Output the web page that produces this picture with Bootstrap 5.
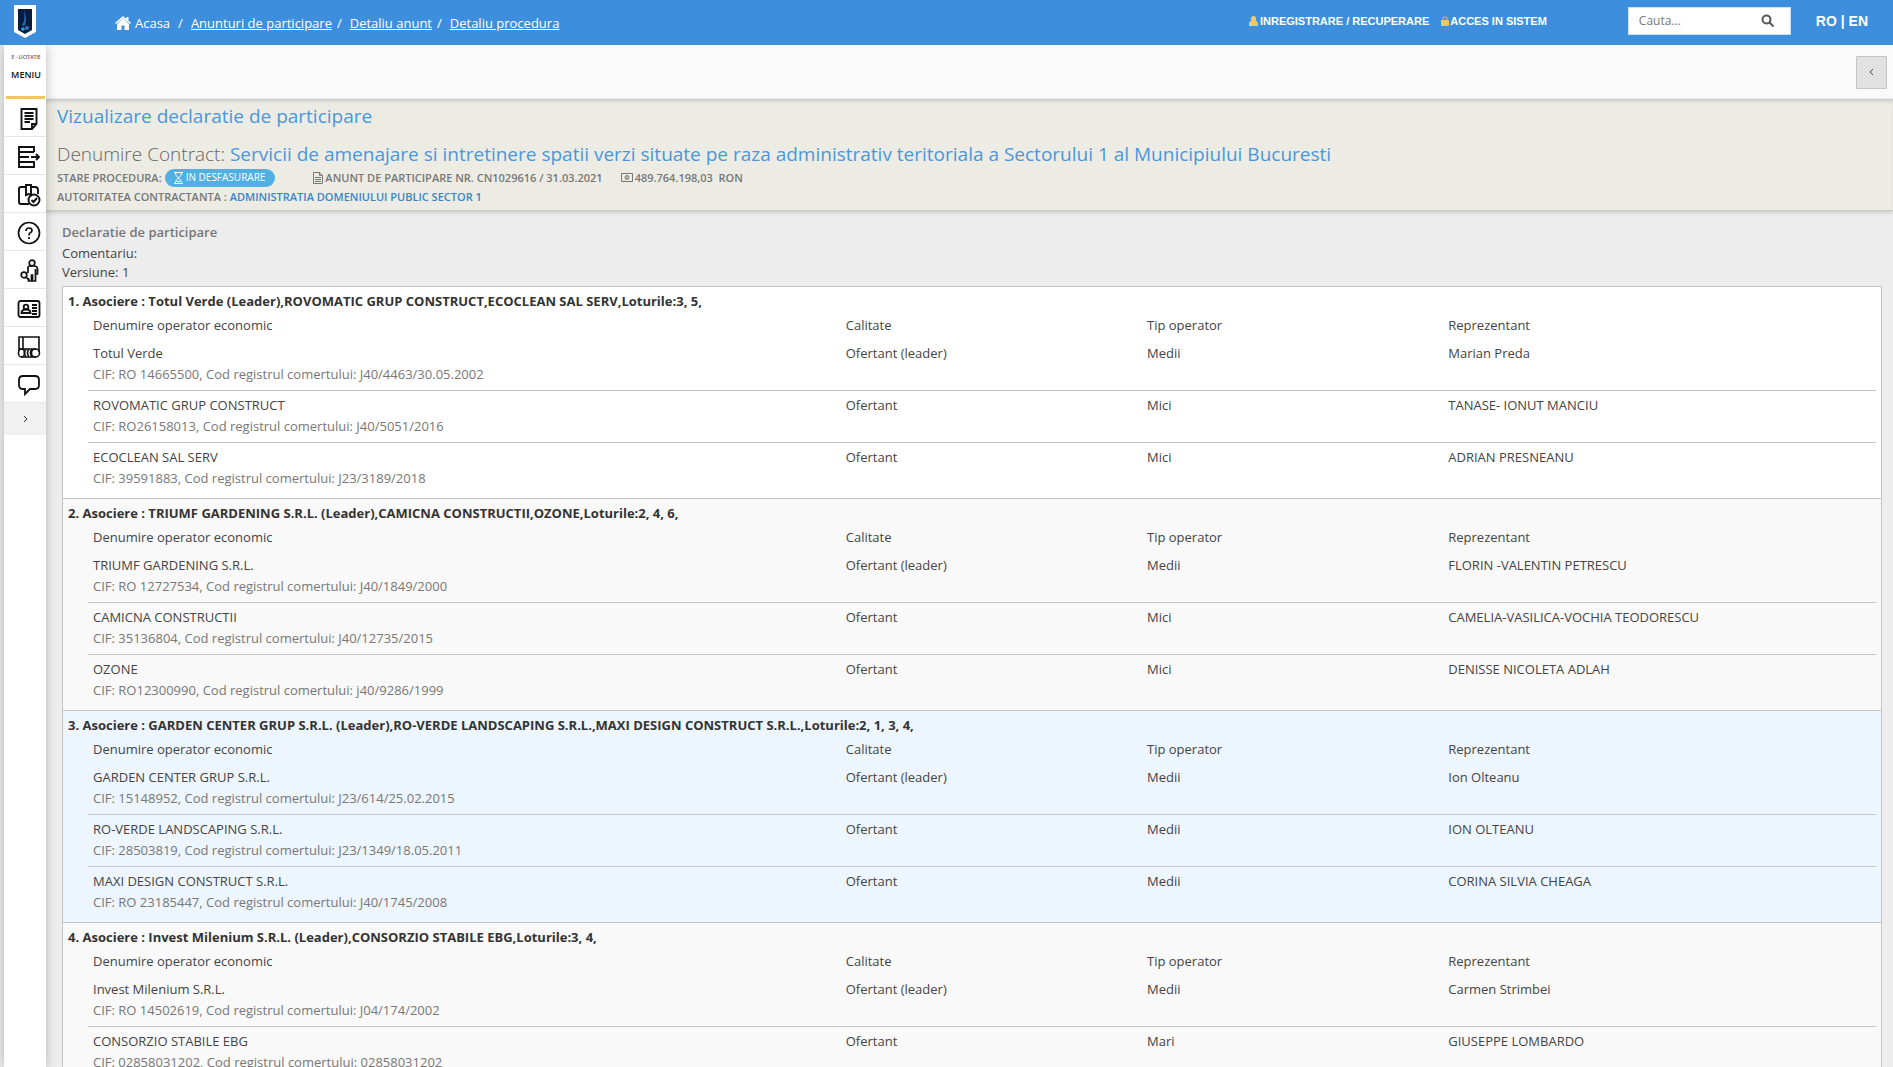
<!DOCTYPE html>
<html lang="ro">
<head>
<meta charset="utf-8">
<meta name="viewport" content="width=device-width, initial-scale=1">
<title>Vizualizare declaratie de participare</title>
<link href="https://cdn.jsdelivr.net/npm/bootstrap@5.3.0/dist/css/bootstrap.min.css" rel="stylesheet">
<style>
  html { overflow: hidden; }
  body { font-family: "Open Sans", sans-serif; font-size: 13px; line-height: 20px; color: #444; background: #ededed; height: 100vh; overflow: hidden; }
  svg { display: block; flex: none; }
  .top-bar { background: #3d8fdd; height: 45px; color: #fff; padding-left: 14px; padding-right: 25px; }
  .top-bar a { color: #fff; }
  .brand-mark { margin-right: 79px; }
  .crumbs { font-size: 13px; padding-top: 2px; }
  .crumbs .crumb + .crumb::before { content: "/"; padding: 0 8px 0 5px; }
  .crumbs .crumb:nth-child(2)::before { padding-left: 8px; }
  .account { font: bold 11px/20px "Liberation Sans", sans-serif; gap: 12px; margin-right: 81px; padding-bottom: 3px; }
  .account a { gap: 2px; }
  .account a + a { gap: 1px; }
  .search-box { width: 163px; height: 28px; background: #fff; border: 1px solid #cfe0f3; margin-right: 25px; margin-bottom: 3px; }
  .search-box input { font-size: 12px; border: 0; padding: 0 0 0 10px; color: #555; background: none; min-width: 0; outline: 0; }
  .search-box input::placeholder { color: #777; opacity: 1; }
  .search-box button { border: 0; background: none; padding: 0 15px 0 0; }
  .langs { font: bold 14px/20px "Liberation Sans", sans-serif; padding-bottom: 3px; }
  .side-menu { width: 42px; margin-left: 4px; background: #fff; box-shadow: 0 0 10px rgba(0,0,0,.25); z-index: 2; flex: none; }
  .side-head { height: 54px; border-bottom: 3px solid #f0c75e; margin: 0 1px 0 2px; padding: 7px 0 0 1px; color: #111; font-weight: 600; font-size: 9px; line-height: 18px; }
  .side-head .tiny { font-size: 5px; line-height: 10px; color: #555; }
  .side-item { height: 38px; border-bottom: 1px solid #e6e6e6; padding: 2px 0 0 7px; color: #111; }
  .side-more { height: 32px; border: 0; background: #f1f1f1; color: #333; }
  .tool-strip { background: #fafafa; height: 54px; padding-right: 6px; }
  .btn-fold { width: 31px; height: 33px; background: #e1e1e1; border: 1px solid #c4c4c4; padding: 0; border-radius: 1px; }
  .summary { background: #ecece4; border-top: 1px solid #ccccc4; border-bottom: 1px solid #ccccc4; box-shadow: 0 1px 4px rgba(0,0,0,.2), inset 0 3px 4px -2px rgba(0,0,0,.15); padding: 3px 11px 4px; font-size: 11px; font-weight: 600; line-height: 19px; color: #777; }
  .summary h1, .summary h2 { font-size: 19px; line-height: 26px; font-weight: 400; color: #4a97dc; margin: 0; }
  .summary h1 { margin-bottom: 12px; }
  .summary h2 { margin-bottom: 1px; }
  .summary h2 .lead-in { font-weight: 300; color: #666; }
  .summary a { color: #3a85c8; text-decoration: none; }
  .state-pill { background: #4fb1e3; color: #fff; border-radius: 9px; height: 18px; font-size: 10px; font-weight: 500; padding: 0 10px 0 8px; gap: 2px; margin: 0 38px 0 3px; }
  .fact { gap: 2px; }
  .fact + .fact { margin-left: 18px; }
  .details { padding: 11px 11px 0 16px; }
  .details h3 { font-size: 13px; line-height: 20px; font-weight: 600; color: #777; margin: 0 0 2px; }
  .details p { line-height: 19px; margin: 0; }
  .assoc-list { border: 1px solid #c4c4c4; border-bottom: 0; margin-top: 4px; }
  .assoc { border-bottom: 1px solid #c4c4c4; padding: 3px 5px 4px; background: #f9f9f9; }
  .assoc:first-child { background: #fff; }
  .assoc.picked { background: #edf5fe; }
  .assoc h4 { font-size: 13px; line-height: 22px; font-weight: 700; color: #333; margin: 0; }
  .operators { margin-left: 20px; width: calc(100% - 20px); table-layout: fixed; }
  .operators th { font-weight: 400; padding: 3px 5px 4px; line-height: 20px; }
  .operators td { vertical-align: top; padding: 4px 5px 5px; border-bottom: 1px solid #c4c4c4; }
  .operators tr:last-child td { border-bottom: 0; }
  .operators .reg-code { color: #777; line-height: 22px; }
  .c-name { width: 42.1%; } .c-mid { width: 16.85%; }
</style>
</head>
<body class="d-flex flex-column">
<header class="top-bar d-flex align-items-center flex-shrink-0">
  <a href="#" class="brand-mark" aria-label="E-licitatie">
    <svg width="22" height="35" viewBox="0 0 22 35"><path d="M0 0H22V27L11 33L0 27Z" fill="#fff"/><path d="M4 4H18V25L11 29L4 25Z" fill="#0b1a3f"/><path d="M10.500 5V15L8 21L11 20L12 14Z" fill="#2a79c0"/><circle cx="9" cy="24" r="1.800" fill="#2aa0d8"/><circle cx="13" cy="23" r="2" fill="#2476b8"/></svg>
  </a>
  <nav class="crumbs d-flex me-auto" aria-label="Breadcrumb">
    <span class="crumb"><a href="#" class="text-decoration-none d-inline-flex align-items-center"><svg width="16" height="14" viewBox="0 0 16 14" fill="#fff"><path d="M8 0L16 7L15 8L8 2L1 8L0 7ZM11.500 1H13.500V5L11.500 3Z"/><path d="M8 2L14 8V14H9.500V9.500H6.500V14H2V8Z"/></svg><span class="ps-1">Acasa</span></a></span>
    <span class="crumb"><a href="#">Anunturi de participare</a></span>
    <span class="crumb"><a href="#">Detaliu anunt</a></span>
    <span class="crumb"><a href="#">Detaliu procedura</a></span>
  </nav>
  <div class="account d-flex">
    <a href="#" class="text-decoration-none d-flex align-items-center"><svg width="9" height="10" viewBox="0 0 9 10" fill="#f5c563"><circle cx="4.500" cy="2.700" r="2.600"/><path d="M0 10V8Q0 5 3 4.500H6Q9 5 9 8V10Z"/></svg>INREGISTRARE / RECUPERARE</a>
    <a href="#" class="text-decoration-none d-flex align-items-center"><svg width="8" height="10" viewBox="0 0 8 10"><path d="M2 5V3Q2 1 4 1Q6 1 6 3V5" fill="none" stroke="#c9a56b" stroke-width="1.500"/><rect y="4" width="8" height="6" rx="1" fill="#f5c563"/></svg>ACCES IN SISTEM</a>
  </div>
  <form class="search-box d-flex align-items-center">
    <input type="text" class="flex-grow-1" placeholder="Cauta..." aria-label="Cauta">
    <button type="button" aria-label="Cauta"><svg width="14" height="14" viewBox="0 0 14 14" fill="none" stroke="#555" stroke-width="2"><circle cx="5.500" cy="5.500" r="4"/><path d="M8.500 8.500L12.500 12.500"/></svg></button>
  </form>
  <div class="langs"><a href="#" class="text-decoration-none">RO</a> | <a href="#" class="text-decoration-none">EN</a></div>
</header>
<div class="d-flex flex-grow-1 overflow-hidden">
  <nav class="side-menu" aria-label="Meniu">
    <div class="side-head text-center"><div class="tiny">E - LICITATIE</div><div class="mt-1">MENIU</div></div>
    <a href="#" class="side-item d-flex align-items-center justify-content-center" aria-label="Anunturi"><svg width="24" height="24" viewBox="0 0 24 24" fill="none" stroke="currentColor" stroke-width="1.900"><path d="M4.500 2H19.500V17L15 22H4.500ZM19.500 17H15V22M7.500 6H16.500M7.500 9H16.500M7.500 12H16.500M7.500 15H13"/></svg></a>
    <a href="#" class="side-item d-flex align-items-center justify-content-center" aria-label="Proceduri"><svg width="24" height="24" viewBox="0 0 24 24" fill="none" stroke="currentColor" stroke-width="1.900"><path d="M17 7V2H2V7H17M2 7V17M2 17H17V22H2V17M2 12H12M14 12H22M19 9L22 12L19 15"/></svg></a>
    <a href="#" class="side-item d-flex align-items-center justify-content-center" aria-label="Achizitii"><svg width="24" height="24" viewBox="0 0 24 24" fill="none" stroke="currentColor" stroke-width="1.900"><path d="M9 4H4Q2 4 2 6V19Q2 21 4 21H12M14 4H18Q21 4 21 7V11M9 2H14V12L11.500 11L9 12Z"/><circle cx="17" cy="17" r="5.500"/><path d="M14.500 17L16.500 19L20 15"/></svg></a>
    <a href="#" class="side-item d-flex align-items-center justify-content-center" aria-label="Intrebari"><svg width="24" height="24" viewBox="0 0 24 24" fill="none" stroke="currentColor" stroke-width="1.700"><circle cx="12" cy="12" r="10.500"/><path d="M9 10Q9 7 12 7Q15 7 15 9.500Q15 11 13 12Q12 12.500 12 14.500M12 16V18"/></svg></a>
    <a href="#" class="side-item d-flex align-items-center justify-content-center" aria-label="Cauta persoane"><svg width="24" height="24" viewBox="0 0 24 24" fill="none" stroke="currentColor" stroke-width="1.700"><circle cx="15" cy="4" r="2.800"/><path d="M11 14V9Q11 7 13 7H17Q20.500 7 20.500 10V15H18.500V22H15.500V16H14.500V22H11.500V19M18.500 10V15"/><circle cx="7" cy="16" r="2.800"/><path d="M9 18L12 21"/></svg></a>
    <a href="#" class="side-item d-flex align-items-center justify-content-center" aria-label="Card identitate"><svg width="24" height="24" viewBox="0 0 24 24" fill="none" stroke="currentColor" stroke-width="1.800"><rect x="1.500" y="4" width="21" height="16" rx="2"/><circle cx="9" cy="10" r="2.300"/><path d="M4.500 16Q4.500 13 8 12.500H10Q13.500 13 13.500 16ZM15 8H20M15 11H20M15 14H20M15 17H20"/></svg></a>
    <a href="#" class="side-item d-flex align-items-center justify-content-center" aria-label="Registru"><svg width="24" height="24" viewBox="0 0 24 24" fill="none" stroke="currentColor" stroke-width="1.600"><path d="M2 16V2H22V17M6 2V14M2 14H19M4 22H19"/><ellipse cx="4.500" cy="18" rx="3" ry="4"/><path d="M9 14Q6 18 9 22M12 14Q9 18 12 22M15 14Q12 18 15 22"/><circle cx="18.500" cy="18" r="4"/></svg></a>
    <a href="#" class="side-item d-flex align-items-center justify-content-center" aria-label="Mesaje"><svg width="24" height="24" viewBox="0 0 24 24" fill="none" stroke="currentColor" stroke-width="1.800"><path d="M6 3H18Q22 3 22 7V12Q22 16 18 16H13L8 21V16H6Q2 16 2 12V7Q2 3 6 3Z"/></svg></a>
    <button type="button" class="side-more w-100 d-flex align-items-center justify-content-center" aria-label="Extinde meniul"><svg width="5" height="8" viewBox="0 0 5 8" fill="none" stroke="currentColor"><path d="M1 1L4 4L1 7"/></svg></button>
  </nav>
  <main class="flex-grow-1">
    <div class="tool-strip d-flex align-items-center justify-content-end">
      <button type="button" class="btn-fold d-flex align-items-center justify-content-center" aria-label="Restrange"><svg width="5" height="8" viewBox="0 0 5 8" fill="none" stroke="#444"><path d="M4 1L1 4L4 7"/></svg></button>
    </div>
    <section class="summary">
      <h1>Vizualizare declaratie de participare</h1>
      <h2><span class="lead-in">Denumire Contract:</span> Servicii de amenajare si intretinere spatii verzi situate pe raza administrativ teritoriala a Sectorului 1 al Municipiului Bucuresti</h2>
      <div class="d-flex align-items-center">
        <span>STARE PROCEDURA:</span>
        <span class="state-pill d-inline-flex align-items-center"><svg width="11" height="12" viewBox="0 0 11 12" fill="none" stroke="#fff"><path d="M1 .5H10M1 11.500H10M2.500 1Q2.500 4 5.500 6Q8.500 4 8.500 1M2.500 11Q2.500 8 5.500 6Q8.500 8 8.500 11M4 9.500H7"/></svg>IN DESFASURARE</span>
        <span class="fact d-inline-flex align-items-center"><svg width="10" height="12" viewBox="0 0 10 12" fill="none" stroke="#777"><path d="M.5 .5H6.500L9.500 3.500V11.500H.5ZM6.500 .5V3.500H9.500M2 5.500H8M2 7.500H8M2 9.500H8"/></svg>ANUNT DE PARTICIPARE NR. CN1029616 / 31.03.2021</span>
        <span class="fact d-inline-flex align-items-center"><svg width="12" height="9" viewBox="0 0 12 9" fill="none" stroke="#777"><path d="M.5 .5H11.500V8.500H.5Z"/><circle cx="6" cy="4.500" r="2"/><path d="M6 3V6"/></svg>489.764.198,03 &nbsp;RON</span>
      </div>
      <div>AUTORITATEA CONTRACTANTA : <a href="#">ADMINISTRATIA DOMENIULUI PUBLIC SECTOR 1</a></div>
    </section>
    <section class="details">
      <h3>Declaratie de participare</h3>
      <p>Comentariu:</p>
      <p>Versiune: 1</p>
      <div class="assoc-list">
        <article class="assoc">
          <h4>1. Asociere : Totul Verde (Leader),ROVOMATIC GRUP CONSTRUCT,ECOCLEAN SAL SERV,Loturile:3, 5,</h4>
          <table class="operators">
            <thead><tr><th class="c-name">Denumire operator economic</th><th class="c-mid">Calitate</th><th class="c-mid">Tip operator</th><th>Reprezentant</th></tr></thead>
            <tbody>
              <tr><td>Totul Verde<div class="reg-code">CIF: RO 14665500, Cod registrul comertului: J40/4463/30.05.2002</div></td><td>Ofertant (leader)</td><td>Medii</td><td>Marian Preda</td></tr>
              <tr><td>ROVOMATIC GRUP CONSTRUCT<div class="reg-code">CIF: RO26158013, Cod registrul comertului: J40/5051/2016</div></td><td>Ofertant</td><td>Mici</td><td>TANASE- IONUT MANCIU</td></tr>
              <tr><td>ECOCLEAN SAL SERV<div class="reg-code">CIF: 39591883, Cod registrul comertului: J23/3189/2018</div></td><td>Ofertant</td><td>Mici</td><td>ADRIAN PRESNEANU</td></tr>
            </tbody>
          </table>
        </article>
        <article class="assoc">
          <h4>2. Asociere : TRIUMF GARDENING S.R.L. (Leader),CAMICNA CONSTRUCTII,OZONE,Loturile:2, 4, 6,</h4>
          <table class="operators">
            <thead><tr><th class="c-name">Denumire operator economic</th><th class="c-mid">Calitate</th><th class="c-mid">Tip operator</th><th>Reprezentant</th></tr></thead>
            <tbody>
              <tr><td>TRIUMF GARDENING S.R.L.<div class="reg-code">CIF: RO 12727534, Cod registrul comertului: J40/1849/2000</div></td><td>Ofertant (leader)</td><td>Medii</td><td>FLORIN -VALENTIN PETRESCU</td></tr>
              <tr><td>CAMICNA CONSTRUCTII<div class="reg-code">CIF: 35136804, Cod registrul comertului: J40/12735/2015</div></td><td>Ofertant</td><td>Mici</td><td>CAMELIA-VASILICA-VOCHIA TEODORESCU</td></tr>
              <tr><td>OZONE<div class="reg-code">CIF: RO12300990, Cod registrul comertului: j40/9286/1999</div></td><td>Ofertant</td><td>Mici</td><td>DENISSE NICOLETA ADLAH</td></tr>
            </tbody>
          </table>
        </article>
        <article class="assoc picked">
          <h4>3. Asociere : GARDEN CENTER GRUP S.R.L. (Leader),RO-VERDE LANDSCAPING S.R.L.,MAXI DESIGN CONSTRUCT S.R.L.,Loturile:2, 1, 3, 4,</h4>
          <table class="operators">
            <thead><tr><th class="c-name">Denumire operator economic</th><th class="c-mid">Calitate</th><th class="c-mid">Tip operator</th><th>Reprezentant</th></tr></thead>
            <tbody>
              <tr><td>GARDEN CENTER GRUP S.R.L.<div class="reg-code">CIF: 15148952, Cod registrul comertului: J23/614/25.02.2015</div></td><td>Ofertant (leader)</td><td>Medii</td><td>Ion Olteanu</td></tr>
              <tr><td>RO-VERDE LANDSCAPING S.R.L.<div class="reg-code">CIF: 28503819, Cod registrul comertului: J23/1349/18.05.2011</div></td><td>Ofertant</td><td>Medii</td><td>ION OLTEANU</td></tr>
              <tr><td>MAXI DESIGN CONSTRUCT S.R.L.<div class="reg-code">CIF: RO 23185447, Cod registrul comertului: J40/1745/2008</div></td><td>Ofertant</td><td>Medii</td><td>CORINA SILVIA CHEAGA</td></tr>
            </tbody>
          </table>
        </article>
        <article class="assoc">
          <h4>4. Asociere : Invest Milenium S.R.L. (Leader),CONSORZIO STABILE EBG,Loturile:3, 4,</h4>
          <table class="operators">
            <thead><tr><th class="c-name">Denumire operator economic</th><th class="c-mid">Calitate</th><th class="c-mid">Tip operator</th><th>Reprezentant</th></tr></thead>
            <tbody>
              <tr><td>Invest Milenium S.R.L.<div class="reg-code">CIF: RO 14502619, Cod registrul comertului: J04/174/2002</div></td><td>Ofertant (leader)</td><td>Medii</td><td>Carmen Strimbei</td></tr>
              <tr><td>CONSORZIO STABILE EBG<div class="reg-code">CIF: 02858031202, Cod registrul comertului: 02858031202</div></td><td>Ofertant</td><td>Mari</td><td>GIUSEPPE LOMBARDO</td></tr>
            </tbody>
          </table>
        </article>
      </div>
    </section>
  </main>
</div>
<script src="https://cdn.jsdelivr.net/npm/bootstrap@5.3.0/dist/js/bootstrap.bundle.min.js"></script>
</body>
</html>
